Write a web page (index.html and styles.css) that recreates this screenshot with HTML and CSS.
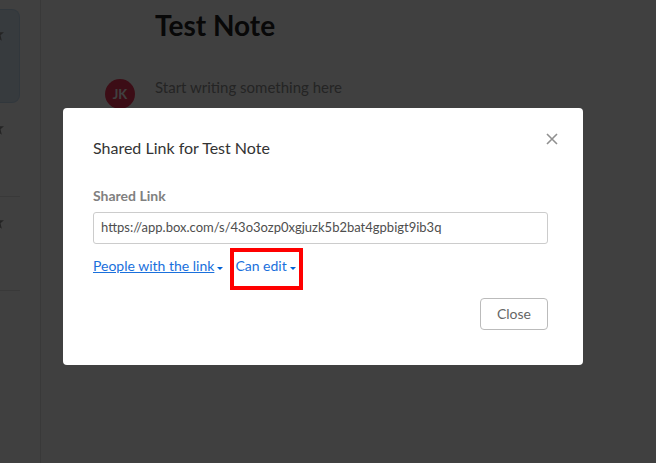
FILE: index.html
```
<!DOCTYPE html>
<html lang="en">
  <head>
    <meta charset="UTF-8" />
    <meta name="viewport" content="width=device-width, initial-scale=1.0" />
    <title>Test Note</title>
    <link rel="stylesheet" href="styles.css">
  </head>
  <body>
    <div class="app">
      <aside class="sidebar">
        <div class="note-item active">
          <svg class="star" viewBox="0 0 12 12"><path d="M6 0 7.6 3.8 12 4 8.8 6.8 10 11.8 6 9 2 11.8 3.2 6.8 0 4 4.4 3.8z" /></svg>
        </div>
        <div class="note-item">
          <svg class="star" viewBox="0 0 12 12"><path d="M6 0 7.6 3.8 12 4 8.8 6.8 10 11.8 6 9 2 11.8 3.2 6.8 0 4 4.4 3.8z" /></svg>
        </div>
        <div class="note-item">
          <svg class="star" viewBox="0 0 12 12"><path d="M6 0 7.6 3.8 12 4 8.8 6.8 10 11.8 6 9 2 11.8 3.2 6.8 0 4 4.4 3.8z" /></svg>
        </div>
      </aside>
      <main class="note">
        <h1>Test Note</h1>
        <div class="line">
          <span class="avatar">JK</span>
          <p class="placeholder">Start writing something here</p>
        </div>
      </main>
    </div>

    <div class="overlay">
      <div class="modal" role="dialog" aria-labelledby="modal-title">
        <header class="modal-header">
          <h2 id="modal-title">Shared Link for Test Note</h2>
          <button class="dismiss" aria-label="Dismiss">
            <svg viewBox="0 0 12 12"><path d="M1 1 11 11M11 1 1 11" /></svg>
          </button>
        </header>
        <label for="shared-link">Shared Link</label>
        <input id="shared-link" type="text" value="https://app.box.com/s/43o3ozp0xgjuzk5b2bat4gpbigt9ib3q" readonly />
        <div class="permissions">
          <button class="menu-toggle people"><span>People with the link</span><i class="caret"></i></button>
          <div class="highlight">
            <button class="menu-toggle"><span>Can edit</span><i class="caret"></i></button>
          </div>
        </div>
        <footer class="modal-footer">
          <button class="close">Close</button>
        </footer>
      </div>
    </div>
  </body>
</html>
```
FILE: styles.css
```
* {
  box-sizing: border-box;
}
body {
  margin: 0;
  background: white;
  font-family: Lato, sans-serif;
  font-size: 14px;
}
button {
  font-family: inherit;
  background: none;
  border: none;
  padding: 0;
  cursor: pointer;
}
h1,
h2,
p {
  margin: 0;
  font-weight: 400;
}

/* Page behind the dialog */
.app {
  display: flex;
  min-height: 100vh;
}
.sidebar {
  width: 41px;
  padding: 9px 20px 0 0;
  border-right: 1px solid #e4e4e4;
  overflow: hidden;
}
.note-item {
  display: flex;
  justify-content: flex-end;
  height: 94px;
  padding: 19px 16px 0 0;
  border-bottom: 1px solid #e4e4e4;
}
.note-item.active {
  background: #d9e9f7;
  border: 1px solid #c4dcf0;
  border-left: none;
  border-radius: 0 8px 8px 0;
  padding-top: 18px;
  padding-right: 15px;
}
.star {
  flex: none;
  width: 13px;
  height: 13px;
  fill: #909090;
}
.note {
  flex: 1;
  padding: 5px 64px 0;
}
.note h1 {
  margin-left: 50px;
  font-size: 28px;
  line-height: 40px;
  font-weight: 700;
  color: #222;
}
.line {
  display: flex;
  gap: 20px;
  margin-top: 34px;
}
.avatar {
  width: 30px;
  height: 30px;
  border-radius: 50%;
  background: #ed3757;
  color: white;
  font-size: 13px;
  font-weight: 700;
  line-height: 30px;
  text-align: center;
}
.placeholder {
  font-size: 15px;
  line-height: 16px;
  color: #909090;
}

/* Dialog */
.overlay {
  position: fixed;
  inset: 0;
  display: flex;
  justify-content: center;
  align-items: flex-start;
  padding: 108px 10px 0 0;
  background: rgba(0, 0, 0, 0.75);
}
.modal {
  width: 100%;
  max-width: 520px;
  padding: 21px 35px 35px 30px;
  background: white;
  border-radius: 4px;
}
.modal-header {
  display: flex;
  justify-content: space-between;
  align-items: flex-start;
}
.modal-header h2 {
  padding-top: 7px;
  font-size: 16px;
  line-height: 24px;
  color: #333;
}
.dismiss {
  display: flex;
  justify-content: center;
  width: 20px;
  height: 20px;
  margin-right: -14px;
  padding-top: 4px;
}
.dismiss svg {
  width: 12px;
  height: 12px;
  stroke: #909090;
  stroke-width: 1.6;
}
.modal label {
  display: block;
  margin-top: 24px;
  line-height: 24px;
  font-weight: 700;
  color: #808080;
}
.modal input {
  display: block;
  width: 100%;
  height: 32px;
  margin-top: 4px;
  padding: 0 7px 2px;
  border: 1px solid #ccc;
  border-radius: 3px;
  font-family: inherit;
  font-size: 13px;
  color: #4e4e4e;
}
.permissions {
  display: flex;
  align-items: flex-start;
  gap: 7px;
  margin-top: 4px;
}
.menu-toggle {
  display: flex;
  align-items: center;
  gap: 3px;
  font-size: 14px;
  line-height: 20px;
  color: #1a70dc;
}
.people {
  padding-top: 8px;
}
.people span {
  text-decoration: underline;
}
.caret {
  margin-top: 4px;
  border: 3px solid transparent;
  border-top-color: #0061d5;
  border-bottom: none;
}
.highlight {
  height: 42px;
  padding: 4px 3px 0 1px;
  border: 4px solid #f00;
}
.modal-footer {
  display: flex;
  justify-content: flex-end;
  margin-top: 8px;
}
.close {
  height: 32px;
  padding: 0 16px 2px;
  border: 1px solid #bbb;
  border-radius: 4px;
  font-size: 14px;
  color: #666;
}
```
